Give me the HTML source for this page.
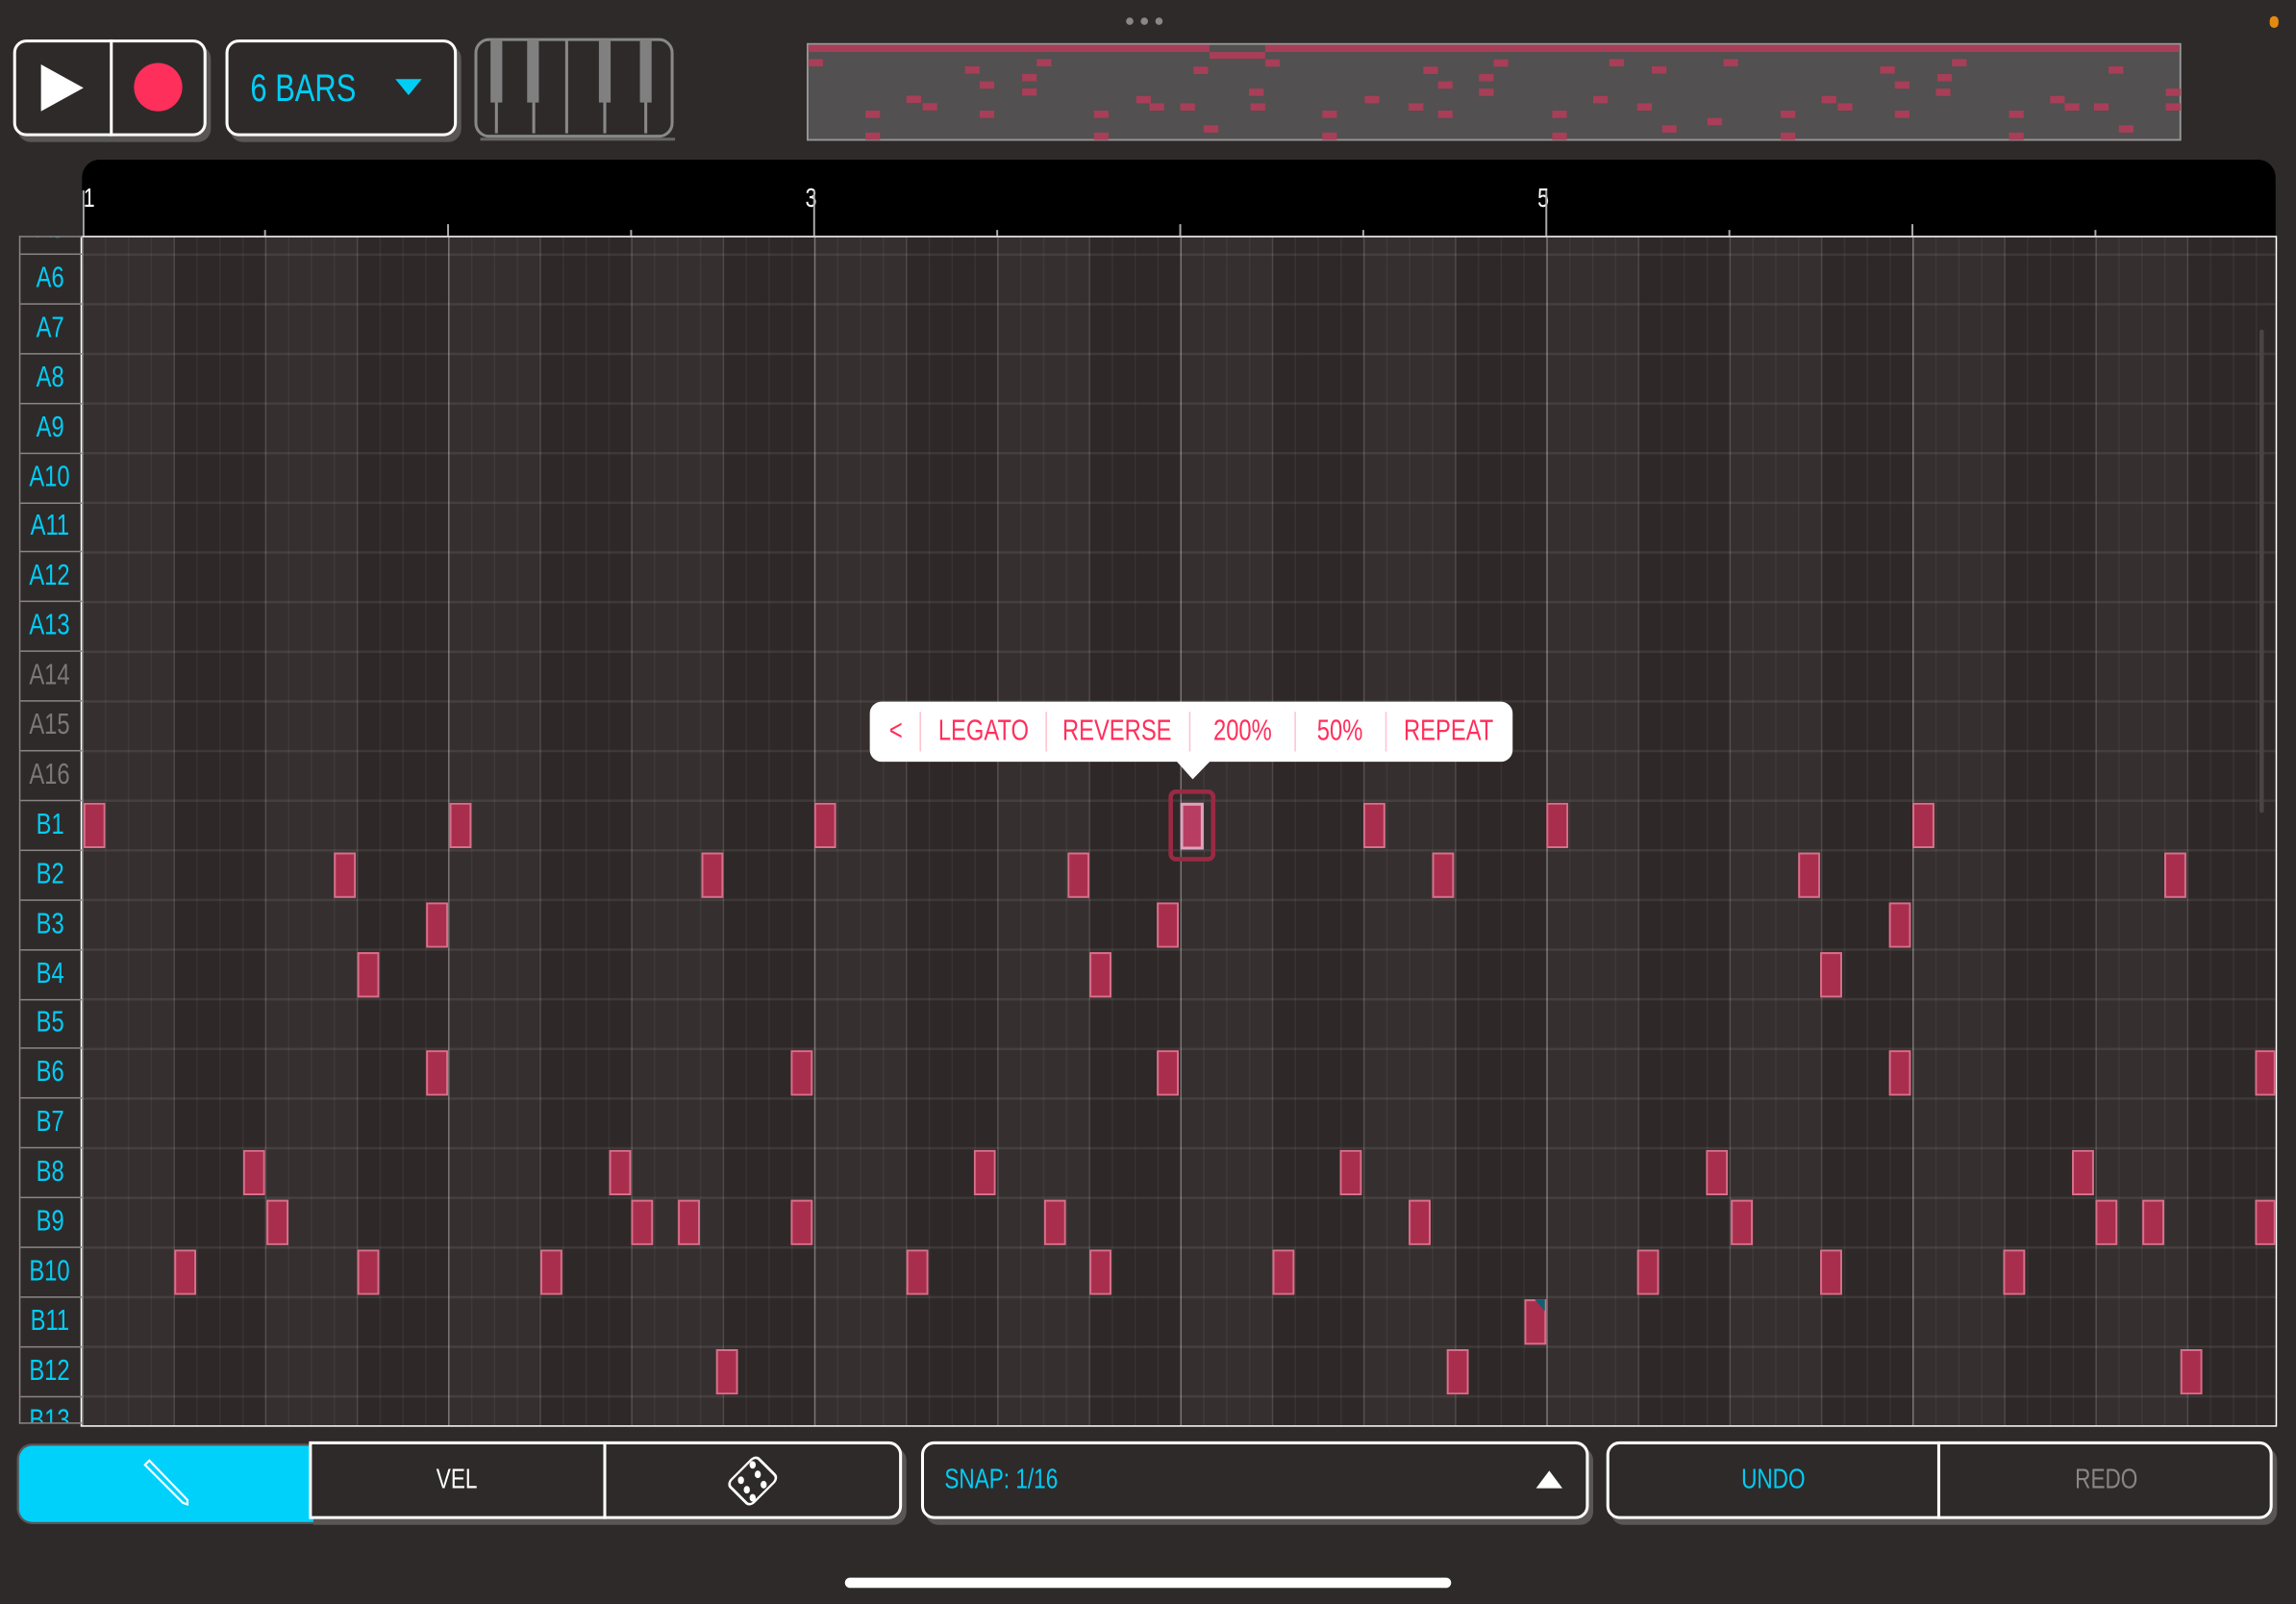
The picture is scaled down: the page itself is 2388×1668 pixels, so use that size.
<!DOCTYPE html>
<html><head><meta charset="utf-8"><style>
html,body{margin:0;padding:0;background:#2f2a2a;overflow:hidden}
#s{position:absolute;left:0;top:0;width:1568px;height:1095px;transform:scale(1.5230,1.5233);transform-origin:0 0;background:#2f2a2a;font-family:"Liberation Sans Narrow","Liberation Sans",sans-serif}
.a{position:absolute}
.c{display:inline-block;transform:scaleX(.78);transform-origin:50% 50%}
.cl{display:inline-block;transform:scaleX(.78);transform-origin:0 50%}
.box{position:absolute;border:2px solid #fff;border-radius:9px;box-shadow:3px 4px 0 #5a5656;box-sizing:border-box;background:#2f2a2a}
.n{position:absolute;width:15px;height:31px;background:#a92e4d;box-shadow:inset 0 0 0 1.3px #d6708a;box-sizing:border-box}
.lbl{position:absolute;left:13px;width:43px;height:34px;border-bottom:1.5px solid #8a8585;box-sizing:border-box;color:#00cdf5;font-size:20px;text-align:center;line-height:33px}
.g{color:#7c7878}
.pt{position:absolute;top:479px;height:41px;line-height:41px;color:#ff2f5c;font-size:20px;text-align:center}
.sep{position:absolute;top:486px;width:1px;height:27px;background:#ffc2d0}
</style></head><body><div id="s">
<div class="a" style="left:769px;top:12px;width:5px;height:5px;border-radius:3px;background:#888;box-shadow:10px 0 #888,20px 0 #888"></div>
<div class="a" style="left:1550px;top:11px;width:6px;height:8px;border-radius:4px;background:#e58a10"></div>

<div class="box" style="left:9px;top:27px;width:132px;height:66px"></div>
<div class="a" style="left:75px;top:27px;width:2px;height:66px;background:#fff"></div>
<svg class="a" style="left:0;top:0" width="160" height="100"><polygon points="28,44 57,60 28,76" fill="#fff"/><ellipse cx="108" cy="59.5" rx="16.5" ry="16.5" fill="#ff2f5c"/></svg>
<div class="box" style="left:154px;top:27px;width:158px;height:66px"></div>
<div class="a" style="left:171px;top:44px;color:#00cdf5;font-size:26px;line-height:32px"><span class="cl">6 BARS</span></div>
<svg class="a" style="left:268px;top:52px" width="22" height="16"><polygon points="2,2 20,2 11,13" fill="#00cdf5"/></svg>
<svg class="a" style="left:323px;top:25px" width="142" height="72">
<rect x="2" y="2" width="134" height="66" rx="9" fill="none" stroke="#888" stroke-width="2"/>
<line x1="5" y1="70" x2="138" y2="70" stroke="#666" stroke-width="2"/>
<g stroke="#888" stroke-width="2"><line x1="16" y1="2" x2="16" y2="66"/><line x1="41.5" y1="2" x2="41.5" y2="66"/><line x1="64" y1="2" x2="64" y2="66"/><line x1="90" y1="2" x2="90" y2="66"/><line x1="118" y1="2" x2="118" y2="66"/></g>
<g fill="#808080"><rect x="12" y="2" width="8" height="43"/><rect x="37" y="2" width="8" height="43"/><rect x="86" y="2" width="8" height="43"/><rect x="114" y="2" width="8" height="43"/></g>
</svg>

<svg class="a" style="left:0;top:0" width="1500" height="100">
<rect x="551.5" y="30" width="937.5" height="65.5" fill="#525050" stroke="#999" stroke-width="1.2"/>
<rect x="552" y="30.6" width="274" height="4.9" fill="#a83e58"/><rect x="864" y="30.6" width="624" height="4.9" fill="#a83e58"/>
<rect x="826" y="35.5" width="38" height="4.6" fill="#a83e58"/>
<g fill="#a83e58">
<rect x="552" y="40.3" width="10" height="5"/><rect x="708" y="40.3" width="10" height="5"/><rect x="659" y="45.3" width="10" height="5"/><rect x="698" y="50.5" width="10" height="5"/><rect x="669" y="55.5" width="10" height="5"/><rect x="698" y="60.3" width="10" height="5"/><rect x="619" y="65.3" width="10" height="5"/><rect x="630" y="70.4" width="10" height="5"/><rect x="591" y="75.5" width="10" height="5"/><rect x="669" y="75.5" width="10" height="5"/><rect x="747" y="75.5" width="10" height="5"/><rect x="591" y="90.5" width="10" height="5"/><rect x="747" y="90.5" width="10" height="5"/><rect x="776" y="65.5" width="10" height="5"/><rect x="785" y="70.5" width="10" height="5"/><rect x="806" y="70.5" width="10" height="5"/><rect x="815" y="45.5" width="10" height="5"/><rect x="822" y="85.5" width="10" height="5"/><rect x="853" y="60.5" width="10" height="5"/><rect x="854" y="70.5" width="10" height="5"/><rect x="864" y="40.5" width="10" height="5"/><rect x="903" y="75.5" width="10" height="5"/><rect x="903" y="90.5" width="10" height="5"/><rect x="932" y="65.5" width="10" height="5"/><rect x="962" y="70.5" width="10" height="5"/><rect x="972" y="45.5" width="10" height="5"/><rect x="982" y="55.5" width="10" height="5"/><rect x="982" y="75.5" width="10" height="5"/><rect x="1010" y="50.5" width="10" height="5"/><rect x="1010" y="60.5" width="10" height="5"/><rect x="1020" y="40.5" width="10" height="5"/>
<rect x="1099" y="40.3" width="10" height="5"/><rect x="1128" y="45.3" width="10" height="5"/><rect x="1177" y="40.3" width="10" height="5"/><rect x="1284" y="45.3" width="10" height="5"/><rect x="1333" y="40.3" width="10" height="5"/><rect x="1440" y="45.3" width="10" height="5"/><rect x="1323" y="50.5" width="10" height="5"/><rect x="1294" y="55.5" width="10" height="5"/><rect x="1322" y="60.5" width="10" height="5"/><rect x="1479" y="60.5" width="10" height="5"/><rect x="1088" y="65.5" width="10" height="5"/><rect x="1244" y="65.5" width="10" height="5"/><rect x="1400" y="65.5" width="10" height="5"/><rect x="1118" y="70.5" width="10" height="5"/><rect x="1255" y="70.5" width="10" height="5"/><rect x="1410" y="70.5" width="10" height="5"/><rect x="1430" y="70.5" width="10" height="5"/><rect x="1479" y="70.5" width="10" height="5"/><rect x="1060" y="75.5" width="10" height="5"/><rect x="1216" y="75.5" width="10" height="5"/><rect x="1294" y="75.5" width="10" height="5"/><rect x="1372" y="75.5" width="10" height="5"/><rect x="1166" y="80.5" width="10" height="5"/><rect x="1135" y="85.5" width="10" height="5"/><rect x="1447" y="85.5" width="10" height="5"/><rect x="1060" y="90.5" width="10" height="5"/><rect x="1216" y="90.5" width="10" height="5"/><rect x="1372" y="90.5" width="10" height="5"/>
</g>
<g stroke="#fff" stroke-width="2.6"><line x1="1514" y1="48" x2="1543" y2="77"/><line x1="1543" y1="48" x2="1514" y2="77"/></g>
</svg>

<!-- ruler -->
<div class="a" style="left:56px;top:109px;width:1498px;height:52px;background:#000;border-radius:12px 12px 0 0"></div>
<div class="a" style="left:57px;top:125px;color:#fff;font-size:18px"><span class="cl">1</span></div>
<div class="a" style="left:550px;top:125px;color:#fff;font-size:18px"><span class="cl">3</span></div>
<div class="a" style="left:1050px;top:125px;color:#fff;font-size:18px"><span class="cl">5</span></div>
<svg class="a" style="left:0;top:100px" width="1568" height="70">
<g stroke="#aaa" stroke-width="1.3"><line x1="57" y1="30" x2="57" y2="61"/><line x1="556" y1="30" x2="556" y2="61"/><line x1="1056" y1="30" x2="1056" y2="61"/>
<line x1="181" y1="57" x2="181" y2="61"/><line x1="306" y1="53" x2="306" y2="61"/><line x1="431" y1="57" x2="431" y2="61"/><line x1="681" y1="57" x2="681" y2="61"/><line x1="806" y1="53" x2="806" y2="61"/><line x1="931" y1="57" x2="931" y2="61"/><line x1="1181" y1="57" x2="1181" y2="61"/><line x1="1306" y1="53" x2="1306" y2="61"/><line x1="1431" y1="57" x2="1431" y2="61"/></g>
</svg>

<!-- grid -->
<div class="a" style="left:56px;top:161px;width:1498px;height:811px;border-top:1.5px solid #fff;border-bottom:1.5px solid #fff;border-right:1px solid #fff;box-sizing:content-box;background-color:#2e2828;
background-image:linear-gradient(90deg,rgba(255,255,255,.22) 1px,transparent 1px),linear-gradient(90deg,rgba(255,255,255,.11) 1px,transparent 1px),linear-gradient(90deg,rgba(255,255,255,.05) 1px,transparent 1px),linear-gradient(180deg,rgba(255,255,255,.08) 1.5px,transparent 1.5px),linear-gradient(90deg,rgba(255,255,255,.03) 50%,transparent 50%);
background-size:250px 100%,62.5px 100%,15.625px 100%,100% 33.9px,125px 100%;background-position:0 0,0 0,0 0,0 11px,0 0;border-left:1.5px solid #fff;margin-left:-1.5px"></div>
<div class="a" style="left:1543px;top:225px;width:3px;height:330px;background:#4a4545;border-radius:2px"></div>

<!-- labels -->
<div class="a" style="left:13px;top:161px;width:43px;height:811px;border-left:1.5px solid #8a8585;border-top:1.5px solid #8a8585;border-bottom:1.5px solid #8a8585;overflow:hidden;box-sizing:border-box">
<div style="position:relative;left:-14.5px;top:-22px">
<div class="lbl" style="top:0"><span class="c">A5</span></div><div class="lbl" style="top:33.9px"><span class="c">A6</span></div><div class="lbl" style="top:67.8px"><span class="c">A7</span></div><div class="lbl" style="top:101.7px"><span class="c">A8</span></div><div class="lbl" style="top:135.6px"><span class="c">A9</span></div><div class="lbl" style="top:169.5px"><span class="c">A10</span></div><div class="lbl" style="top:203.4px"><span class="c">A11</span></div><div class="lbl" style="top:237.3px"><span class="c">A12</span></div><div class="lbl" style="top:271.2px"><span class="c">A13</span></div><div class="lbl g" style="top:305.1px"><span class="c">A14</span></div><div class="lbl g" style="top:339px"><span class="c">A15</span></div><div class="lbl g" style="top:372.9px"><span class="c">A16</span></div><div class="lbl" style="top:406.8px"><span class="c">B1</span></div><div class="lbl" style="top:440.7px"><span class="c">B2</span></div><div class="lbl" style="top:474.6px"><span class="c">B3</span></div><div class="lbl" style="top:508.5px"><span class="c">B4</span></div><div class="lbl" style="top:542.4px"><span class="c">B5</span></div><div class="lbl" style="top:576.3px"><span class="c">B6</span></div><div class="lbl" style="top:610.2px"><span class="c">B7</span></div><div class="lbl" style="top:644.1px"><span class="c">B8</span></div><div class="lbl" style="top:678px"><span class="c">B9</span></div><div class="lbl" style="top:711.9px"><span class="c">B10</span></div><div class="lbl" style="top:745.8px"><span class="c">B11</span></div><div class="lbl" style="top:779.7px"><span class="c">B12</span></div><div class="lbl" style="top:813.6px"><span class="c">B13</span></div>
</div></div>

<!-- notes -->
<div class="n" style="left:57px;top:548px"></div><div class="n" style="left:307px;top:548px"></div><div class="n" style="left:556px;top:548px"></div><div class="n" style="left:931px;top:548px"></div><div class="n" style="left:1056px;top:548px"></div><div class="n" style="left:1306px;top:548px"></div>
<div class="n" style="left:228px;top:582px"></div><div class="n" style="left:479px;top:582px"></div><div class="n" style="left:729px;top:582px"></div><div class="n" style="left:978px;top:582px"></div><div class="n" style="left:1228px;top:582px"></div><div class="n" style="left:1478px;top:582px"></div>
<div class="n" style="left:291px;top:616px"></div><div class="n" style="left:790px;top:616px"></div><div class="n" style="left:1290px;top:616px"></div>
<div class="n" style="left:244px;top:650px"></div><div class="n" style="left:744px;top:650px"></div><div class="n" style="left:1243px;top:650px"></div>
<div class="n" style="left:291px;top:717px"></div><div class="n" style="left:540px;top:717px"></div><div class="n" style="left:790px;top:717px"></div><div class="n" style="left:1290px;top:717px"></div><div class="n" style="left:1540px;top:717px;width:14px"></div>
<div class="n" style="left:166px;top:785px"></div><div class="n" style="left:416px;top:785px"></div><div class="n" style="left:665px;top:785px"></div><div class="n" style="left:915px;top:785px"></div><div class="n" style="left:1165px;top:785px"></div><div class="n" style="left:1415px;top:785px"></div>
<div class="n" style="left:182px;top:819px"></div><div class="n" style="left:431px;top:819px"></div><div class="n" style="left:463px;top:819px"></div><div class="n" style="left:540px;top:819px"></div><div class="n" style="left:713px;top:819px"></div><div class="n" style="left:962px;top:819px"></div><div class="n" style="left:1182px;top:819px"></div><div class="n" style="left:1431px;top:819px"></div><div class="n" style="left:1463px;top:819px"></div><div class="n" style="left:1540px;top:819px;width:14px"></div>
<div class="n" style="left:119px;top:853px"></div><div class="n" style="left:244px;top:853px"></div><div class="n" style="left:369px;top:853px"></div><div class="n" style="left:619px;top:853px"></div><div class="n" style="left:744px;top:853px"></div><div class="n" style="left:869px;top:853px"></div><div class="n" style="left:1118px;top:853px"></div><div class="n" style="left:1243px;top:853px"></div><div class="n" style="left:1368px;top:853px"></div>
<div class="n" style="left:1041px;top:887px"></div>
<svg class="a" style="left:1047px;top:886px" width="10" height="12"><polygon points="1,1 8,1 8,9" fill="#116070"/></svg>
<div class="n" style="left:489px;top:921px"></div><div class="n" style="left:988px;top:921px"></div><div class="n" style="left:1489px;top:921px"></div>

<!-- selected -->
<div class="a" style="left:797.5px;top:538.5px;width:32px;height:49px;border:3.5px solid #9a2a44;border-radius:5px;box-sizing:border-box"></div>
<div class="a" style="left:806px;top:548px;width:16px;height:32px;background:#b83d63;border:2.5px solid #d9a4bd;box-sizing:border-box"></div>

<!-- popup -->
<div class="a" style="left:594px;top:479px;width:439px;height:41px;background:#fff;border-radius:8px"></div>
<svg class="a" style="left:800px;top:518px" width="30" height="16"><polygon points="2,0 28,0 14.5,14" fill="#fff"/></svg>
<div class="pt" style="left:600px;width:24px"><span class="c">&lt;</span></div>
<div class="sep" style="left:628px"></div>
<div class="pt" style="left:630px;width:83px"><span class="c">LEGATO</span></div>
<div class="sep" style="left:714px"></div>
<div class="pt" style="left:715px;width:96px"><span class="c">REVERSE</span></div>
<div class="sep" style="left:812px"></div>
<div class="pt" style="left:813px;width:71px"><span class="c">200%</span></div>
<div class="sep" style="left:884px"></div>
<div class="pt" style="left:885px;width:61px"><span class="c">50%</span></div>
<div class="sep" style="left:946px"></div>
<div class="pt" style="left:947px;width:84px"><span class="c">REPEAT</span></div>

<!-- bottom toolbar -->
<div class="a" style="left:13px;top:987px;width:203px;height:52px;background:#00d1fb;border-radius:9px 0 0 9px;box-shadow:0 0 0 1.5px #5a5656"></div>
<svg class="a" style="left:95px;top:990px" width="40" height="46"><polygon points="4,10 7,7 33,34 33,37 30,36" fill="none" stroke="#fff" stroke-width="1.4"/></svg>
<div class="box" style="left:211px;top:984px;width:405px;height:53px;border-radius:0 9px 9px 0"></div>
<div class="a" style="left:412px;top:984px;width:2px;height:53px;background:#fff"></div>
<div class="a" style="left:211px;top:984px;width:202px;height:53px;line-height:53px;text-align:center;color:#fff;font-size:19px"><span class="c">VEL</span></div>
<svg class="a" style="left:492px;top:989px" width="44" height="44">
<rect x="9" y="9" width="26" height="26" rx="4" fill="none" stroke="#fff" stroke-width="1.8" style="transform-origin:22px 22px;transform:rotate(45deg) scale(.84,1.05)"/>
<g fill="#fff"><ellipse cx="22" cy="11" rx="2.1" ry="2.6"/><ellipse cx="25.5" cy="17.5" rx="2.1" ry="2.6"/><ellipse cx="14" cy="21.5" rx="2.1" ry="2.6"/><ellipse cx="29.5" cy="24.5" rx="2.1" ry="2.6"/><ellipse cx="18" cy="28" rx="2.1" ry="2.6"/><ellipse cx="22" cy="33.5" rx="2.1" ry="2.6"/></g>
</svg>
<div class="box" style="left:629px;top:984px;width:456px;height:53px"></div>
<div class="a" style="left:645px;top:984px;height:53px;line-height:53px;color:#00cdf5;font-size:19px"><span class="cl">SNAP: 1/16</span></div>
<svg class="a" style="left:1047px;top:1002px" width="22" height="16"><polygon points="2,14 20,14 11,2" fill="#fff"/></svg>
<div class="box" style="left:1097px;top:984px;width:455px;height:53px"></div>
<div class="a" style="left:1323px;top:984px;width:2px;height:53px;background:#fff"></div>
<div class="a" style="left:1097px;top:984px;width:227px;height:53px;line-height:53px;text-align:center;color:#00cdf5;font-size:19px"><span class="c">UNDO</span></div>
<div class="a" style="left:1325px;top:984px;width:227px;height:53px;line-height:53px;text-align:center;color:#8a8686;font-size:19px"><span class="c">REDO</span></div>

<div class="a" style="left:577px;top:1077px;width:414px;height:7px;border-radius:4px;background:#fff"></div>
</div></body></html>
